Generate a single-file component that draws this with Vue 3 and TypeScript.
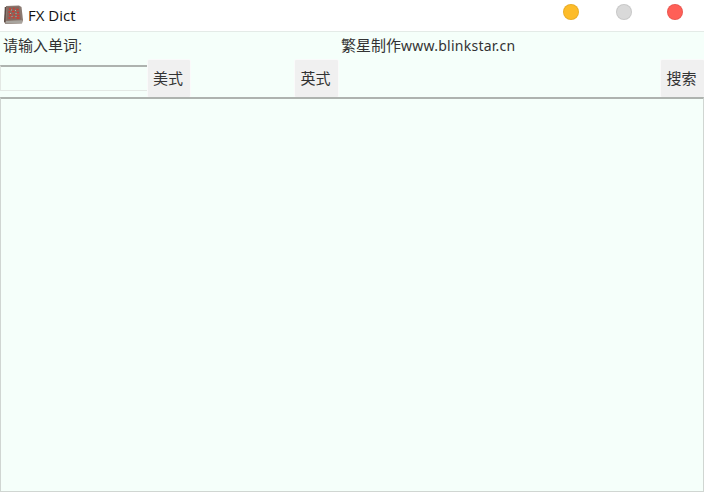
<template>
  <div class="window">
    <header class="title-bar">
      <svg class="app-icon" width="19" height="19" viewBox="0 0 19 19">
        <path d="M2 1 L15 0.5 L17.5 2 L19 15 L18 18.5 L1.5 19 L0 17 Z" fill="#8b7a72" />
        <path d="M1.5 16 L18 15.2 L18 18 L2 18.5 Z" fill="#a8a49e" />
        <path d="M3.5 2 L15 1.5 L17 14.5 L2.5 15.5 Z" fill="#85685f" />
        <path d="M1.5 2 L0.8 17" stroke="#5b4a44" stroke-width="1.5" />
        <path
          d="M5 4 h2 M9 3.5 h1.5 M12.5 4.5 h2 M4.5 7 h1.5 M8 6.5 h2.5 M13 7.5 h2 M5 10 h2.5 M9.5 9.5 h1.5 M13 10.5 h2.5 M4.5 13 h2 M8.5 12.5 h2 M12.5 13 h3"
          stroke="#d9362d"
          stroke-width="1.6"
          fill="none"
        />
        <path d="M7 5 h1 M11 5.5 h1 M6 8.5 h1 M11.5 8.5 h1 M7.5 11.5 h1 M11.5 11.5 h1" stroke="#b9a79d" stroke-width="1.2" />
      </svg>
      <span class="app-title">{{ title }}</span>
      <div class="lights">
        <span v-for="light in lights" :key="light" class="light" :class="light"></span>
      </div>
    </header>

    <main class="content">
      <div class="info-row">
        <label class="prompt" for="word">请输入单词:</label>
        <span class="credit">繁星制作<span class="site">www.blinkstar.cn</span></span>
      </div>
      <div class="tool-row">
        <input id="word" v-model="word" class="word-input" type="text" />
        <button class="btn us-btn" type="button">美式</button>
        <button class="btn uk-btn" type="button">英式</button>
        <button class="btn search-btn" type="button">搜索</button>
      </div>
      <textarea v-model="result" class="result"></textarea>
    </main>
  </div>
</template>

<script setup lang="ts">
import { ref } from 'vue';

const title = 'FX Dict';
const lights = ['min', 'max', 'close'];

const word = ref('');
const result = ref('');
</script>

<style>
html,
body {
  margin: 0;
  background: #fff;
}
</style>

<style scoped>
.window {
  width: 704px;
  height: 492px;
  display: flex;
  flex-direction: column;
  overflow: hidden;
  font-family: "Liberation Sans", "Noto Sans CJK SC", sans-serif;
  color: #333;
}

.title-bar {
  height: 31px;
  flex: none;
  display: flex;
  align-items: flex-start;
  padding: 5px 0 0 4px;
  box-sizing: border-box;
  background: #fff;
}

.app-icon {
  flex: none;
  margin-right: 5px;
}

.app-title {
  font-family: "Open Sans", "Noto Sans", sans-serif;
  font-size: 15px;
  line-height: 20px;
  color: #111;
}

.lights {
  margin-left: auto;
  margin-top: -1px;
  display: flex;
  padding-right: 21px;
}

.light {
  width: 16px;
  height: 16px;
  box-sizing: border-box;
  border-radius: 50%;
  border: 1px solid rgba(0, 0, 0, 0.08);
}

.light.min {
  background: #fdbc29;
}

.light.max {
  margin-left: 37px;
  background: #d9d9d9;
}

.light.close {
  margin-left: 35px;
  background: #ff5f57;
}

.content {
  flex: 1;
  display: flex;
  flex-direction: column;
  min-height: 0;
  background: #f5fffa;
  border-top: 1px solid #e4ebe7;
}

.info-row {
  height: 28px;
  flex: none;
  display: flex;
  align-items: center;
  font-size: 15px;
  line-height: 20px;
}

.prompt {
  width: 341px;
  padding-left: 3px;
  box-sizing: border-box;
}

.site {
  font-family: "Noto Sans", sans-serif;
  font-size: 14px;
  letter-spacing: 0.25px;
}

.tool-row {
  height: 37px;
  flex: none;
  display: flex;
  align-items: flex-start;
}

.word-input {
  width: 148px;
  height: 26px;
  box-sizing: border-box;
  margin: 5px 0 0;
  padding: 0 4px;
  border: 1px solid #e3e8e4;
  border-top: 2px solid #aeb3af;
  background: #f5fffa;
  outline: none;
}

.btn {
  width: 42px;
  height: 37px;
  padding: 0 2px 3px 0;
  border: none;
  border-radius: 1px;
  background: #f0f0f0;
  box-shadow: 0 -1px 0 #fafafa, -1px 0 0 #fafafa, 1px 0 0 #fafafa;
  font-family: inherit;
  font-size: 15px;
  color: #333;
}

.uk-btn {
  margin-left: 105px;
  width: 43px;
}

.search-btn {
  margin-left: auto;
  width: 43px;
}

.result {
  flex: 1;
  display: block;
  min-height: 0;
  margin: 0;
  padding: 0;
  box-sizing: border-box;
  border: 1px solid #d0d6d2;
  border-top: 2px solid #aeb3af;
  background: #f5fffa;
  outline: none;
  resize: none;
}
</style>
